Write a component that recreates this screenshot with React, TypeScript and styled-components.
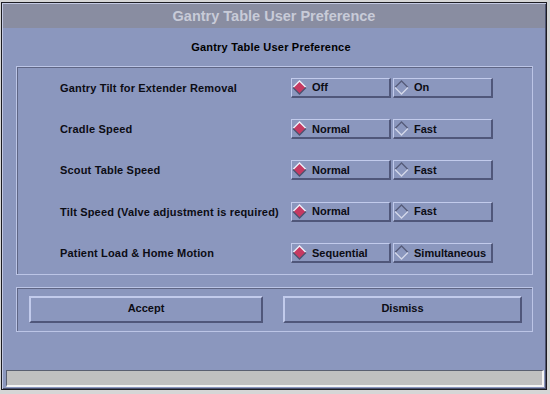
import styled, { createGlobalStyle } from "styled-components";

const GlobalStyle = createGlobalStyle`
  html, body {
    margin: 0;
    padding: 0;
    background: #d6d6d6;
  }
  body {
    font-family: "Liberation Sans", Arial, sans-serif;
  }
`;

type Pref = {
  label: string;
  options: [string, string];
  selected: 0 | 1;
};

const prefs: Pref[] = [
  { label: "Gantry Tilt for Extender Removal", options: ["Off", "On"], selected: 0 },
  { label: "Cradle Speed", options: ["Normal", "Fast"], selected: 0 },
  { label: "Scout Table Speed", options: ["Normal", "Fast"], selected: 0 },
  { label: "Tilt Speed (Valve adjustment is required)", options: ["Normal", "Fast"], selected: 0 },
  { label: "Patient Load & Home Motion", options: ["Sequential", "Simultaneous"], selected: 0 },
];

const Diamond = ({ on }: { on: boolean }) => (
  <svg width="15" height="15" viewBox="0 0 15 15">
    <polygon points="7.5,1 14,7.5 7.5,14 1,7.5" fill={on ? "#c63a62" : "#8b97be"} />
    <polyline
      points="1,7.5 7.5,1 14,7.5"
      fill="none"
      stroke={on ? "#eef0fa" : "#565c7a"}
      strokeWidth="1.3"
    />
    <polyline
      points="1,7.5 7.5,14 14,7.5"
      fill="none"
      stroke={on ? "#4c5270" : "#d4d8ea"}
      strokeWidth="1.3"
    />
  </svg>
);

const App = () => {
  return (
    <>
      <GlobalStyle />
      <Window>
        <TitleBar>Gantry Table User Preference</TitleBar>
        <Body>
          <Subtitle>Gantry Table User Preference</Subtitle>
          <PrefGroup>
            {prefs.map((p) => (
              <PrefRow key={p.label}>
                <PrefLabel>{p.label}</PrefLabel>
                <ToggleSet>
                  {p.options.map((o, i) => (
                    <Toggle key={o}>
                      <Diamond on={p.selected === i} />
                      <span>{o}</span>
                    </Toggle>
                  ))}
                </ToggleSet>
              </PrefRow>
            ))}
          </PrefGroup>
          <ActionGroup>
            <PushButton $width={234}>Accept</PushButton>
            <PushButton $width={239}>Dismiss</PushButton>
          </ActionGroup>
          <Spacer />
          <StatusBar />
        </Body>
      </Window>
    </>
  );
};

export default App;

const Window = styled.div`
  margin: 2px 0 0 1px;
  width: 546px;
  height: 388px;
  box-sizing: border-box;
  border: 1px solid #1c1c22;
  background: #8b97be;
  display: flex;
  flex-direction: column;
  box-shadow: inset 1px 1px 0 #c3c9e2, inset -1px -1px 0 #4d5370;
`;

const TitleBar = styled.div`
  margin: 1px 1px 0 1px;
  height: 24px;
  background: #898da1;
  color: #c8cbd8;
  font-weight: bold;
  font-size: 14.5px;
  line-height: 24px;
  text-align: center;
`;

const Body = styled.div`
  flex: 1;
  display: flex;
  flex-direction: column;
  padding: 0 1px 2px 1px;
`;

const Subtitle = styled.div`
  height: 38px;
  line-height: 38px;
  text-align: center;
  padding-right: 6px;
  font-size: 11px;
  letter-spacing: 0.2px;
  font-weight: bold;
  color: #000;
`;

const Etched = styled.div`
  margin: 0 12px 0 13px;
  box-sizing: border-box;
  border: 1px solid #bcc5e6;
  box-shadow: inset 1px 1px 0 #5f6685;
`;

const PrefGroup = styled(Etched)`
  height: 209px;
  display: grid;
  grid-template-rows: repeat(5, 1fr);
`;

const PrefRow = styled.div`
  display: grid;
  grid-template-columns: 231px auto;
  align-items: center;
  padding-left: 43px;
`;

const PrefLabel = styled.div`
  font-size: 11px;
  letter-spacing: 0.17px;
  font-weight: bold;
  color: #0c0c14;
`;

const ToggleSet = styled.div`
  display: flex;
  gap: 2px;
`;

const Toggle = styled.div`
  width: 100px;
  height: 20px;
  box-sizing: border-box;
  display: flex;
  align-items: center;
  gap: 5px;
  padding-left: 0;
  border-top: 1px solid #c2cbec;
  border-left: 1px solid #c2cbec;
  border-right: 2px solid #50577a;
  border-bottom: 2px solid #50577a;
  font-size: 11px;
  font-weight: bold;
  color: #0c0c14;
`;

const ActionGroup = styled(Etched)`
  margin-top: 12px;
  height: 45px;
  display: flex;
  align-items: center;
  justify-content: space-between;
  padding: 0 10px 1px 12px;
`;

const PushButton = styled.div<{ $width: number }>`
  width: ${(p) => p.$width}px;
  height: 27px;
  box-sizing: border-box;
  padding-bottom: 2px;
  border-top: 2px solid #c2cbec;
  border-left: 2px solid #c2cbec;
  border-right: 2px solid #50577a;
  border-bottom: 2px solid #50577a;
  display: flex;
  align-items: center;
  justify-content: center;
  font-size: 11px;
  font-weight: bold;
  color: #0c0c14;
`;

const Spacer = styled.div`
  flex: 1;
`;

const StatusBar = styled.div`
  margin: 0 1px 0 3px;
  height: 17px;
  box-sizing: border-box;
  background: #c0c0c0;
  border-top: 1px solid #5a5f70;
  border-left: 1px solid #5a5f70;
  border-right: 2px solid #f4f4f4;
  border-bottom: 2px solid #f4f4f4;
`;
